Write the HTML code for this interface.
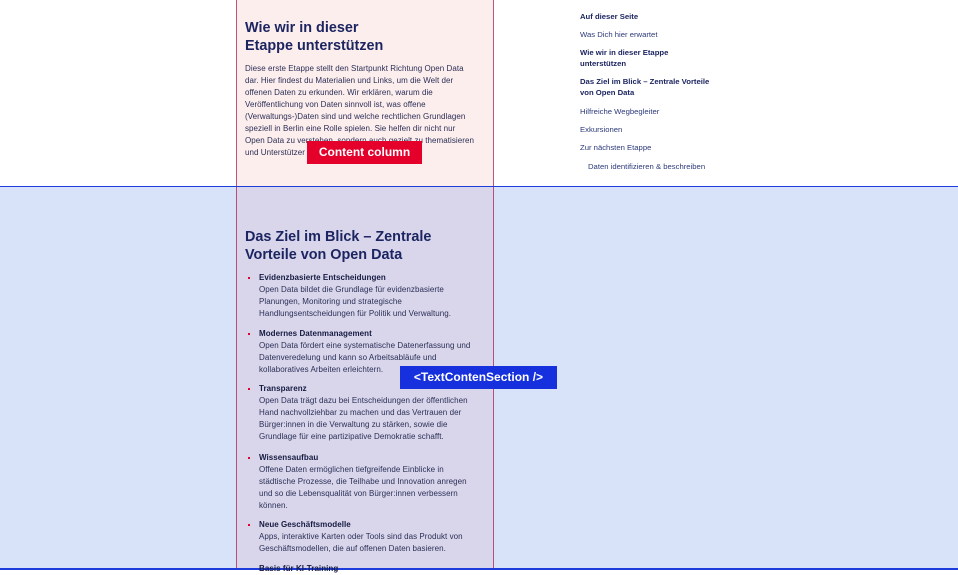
<!DOCTYPE html>
<html><head><meta charset="utf-8"><style>
*{margin:0;padding:0;box-sizing:border-box}
body{width:958px;height:570px;overflow:hidden;position:relative;background:#fff;font-family:"Liberation Sans",sans-serif;color:#1c2250}
.a{position:absolute;white-space:nowrap}
.t{font-size:8px;line-height:12px;color:#2a2f55;letter-spacing:0.05px}
.h{font-size:14.4px;font-weight:bold;line-height:18px;color:#1c2560}
.n{font-size:7.7px;line-height:11px;color:#2d3a7a}
.nb{font-weight:bold;color:#1c2560}
.b{font-weight:bold;color:#151a40}
.d{position:absolute;width:2px;height:2px;background:#e4002b}
</style></head><body>
<div class="a" style="left:0;top:187px;width:958px;height:383px;background:#d8e2f8"></div>
<div class="a" style="left:0;top:186px;width:958px;height:1px;background:#1e3bdc"></div>
<div class="a" style="left:0;top:568px;width:958px;height:2px;background:#1e3bdc"></div>
<div class="a" style="left:236px;top:0;width:258px;height:186px;background:#fdeeee;border-left:1px solid #c0547a;border-right:1px solid #c0547a"></div>
<div class="a" style="left:236px;top:187px;width:258px;height:381px;background:#d9d6ec;border-left:1px solid #b84f7a;border-right:1px solid #b84f7a"></div>

<div class="a h" style="left:245px;top:19px">Wie wir in dieser<br>Etappe unterstützen</div>
<div class="a t" style="left:245px;top:63px">Diese erste Etappe stellt den Startpunkt Richtung Open Data<br>dar. Hier findest du Materialien und Links, um die Welt der<br>offenen Daten zu erkunden. Wir erklären, warum die<br>Veröffentlichung von Daten sinnvoll ist, was offene<br>(Verwaltungs-)Daten sind und welche rechtlichen Grundlagen<br>speziell in Berlin eine Rolle spielen. Sie helfen dir nicht nur<br>Open Data zu verstehen, sondern auch gezielt zu thematisieren<br>und Unterstützer</div>
<div class="a" style="left:307px;top:141px;width:115px;height:23px;background:#e4002b;color:#fff;font-weight:bold;font-size:12px;line-height:23px;text-align:center">Content column</div>

<div class="a n nb" style="left:580px;top:11px">Auf dieser Seite</div>
<div class="a n" style="left:580px;top:29px">Was Dich hier erwartet</div>
<div class="a n nb" style="left:580px;top:47px">Wie wir in dieser Etappe<br>unterstützen</div>
<div class="a n nb" style="left:580px;top:76px">Das Ziel im Blick – Zentrale Vorteile<br>von Open Data</div>
<div class="a n" style="left:580px;top:106px">Hilfreiche Wegbegleiter</div>
<div class="a n" style="left:580px;top:124px">Exkursionen</div>
<div class="a n" style="left:580px;top:142px">Zur nächsten Etappe</div>
<div class="a n" style="left:588px;top:161px">Daten identifizieren &amp; beschreiben</div>

<div class="a h" style="left:245px;top:228px">Das Ziel im Blick – Zentrale<br>Vorteile von Open Data</div>
<div class="d" style="left:248px;top:277px"></div>
<div class="a t" style="left:259px;top:272px"><span class="b">Evidenzbasierte Entscheidungen</span><br>Open Data bildet die Grundlage für evidenzbasierte<br>Planungen, Monitoring und strategische<br>Handlungsentscheidungen für Politik und Verwaltung.</div>
<div class="d" style="left:248px;top:333px"></div>
<div class="a t" style="left:259px;top:328px"><span class="b">Modernes Datenmanagement</span><br>Open Data fördert eine systematische Datenerfassung und<br>Datenveredelung und kann so Arbeitsabläufe und<br>kollaboratives Arbeiten erleichtern.</div>
<div class="d" style="left:248px;top:388px"></div>
<div class="a t" style="left:259px;top:383px"><span class="b">Transparenz</span><br>Open Data trägt dazu bei Entscheidungen der öffentlichen<br>Hand nachvollziehbar zu machen und das Vertrauen der<br>Bürger:innen in die Verwaltung zu stärken, sowie die<br>Grundlage für eine partizipative Demokratie schafft.</div>
<div class="d" style="left:248px;top:457px"></div>
<div class="a t" style="left:259px;top:452px"><span class="b">Wissensaufbau</span><br>Offene Daten ermöglichen tiefgreifende Einblicke in<br>städtische Prozesse, die Teilhabe und Innovation anregen<br>und so die Lebensqualität von Bürger:innen verbessern<br>können.</div>
<div class="d" style="left:248px;top:524px"></div>
<div class="a t" style="left:259px;top:519px"><span class="b">Neue Geschäftsmodelle</span><br>Apps, interaktive Karten oder Tools sind das Produkt von<br>Geschäftsmodellen, die auf offenen Daten basieren.</div>
<div class="a t" style="left:259px;top:563px"><span class="b">Basis für KI-Training</span></div>

<div class="a" style="left:400px;top:366px;width:157px;height:23px;background:#1530dc;color:#fff;font-weight:bold;font-size:12px;line-height:23px;text-align:center">&lt;TextContenSection /&gt;</div>
</body></html>
